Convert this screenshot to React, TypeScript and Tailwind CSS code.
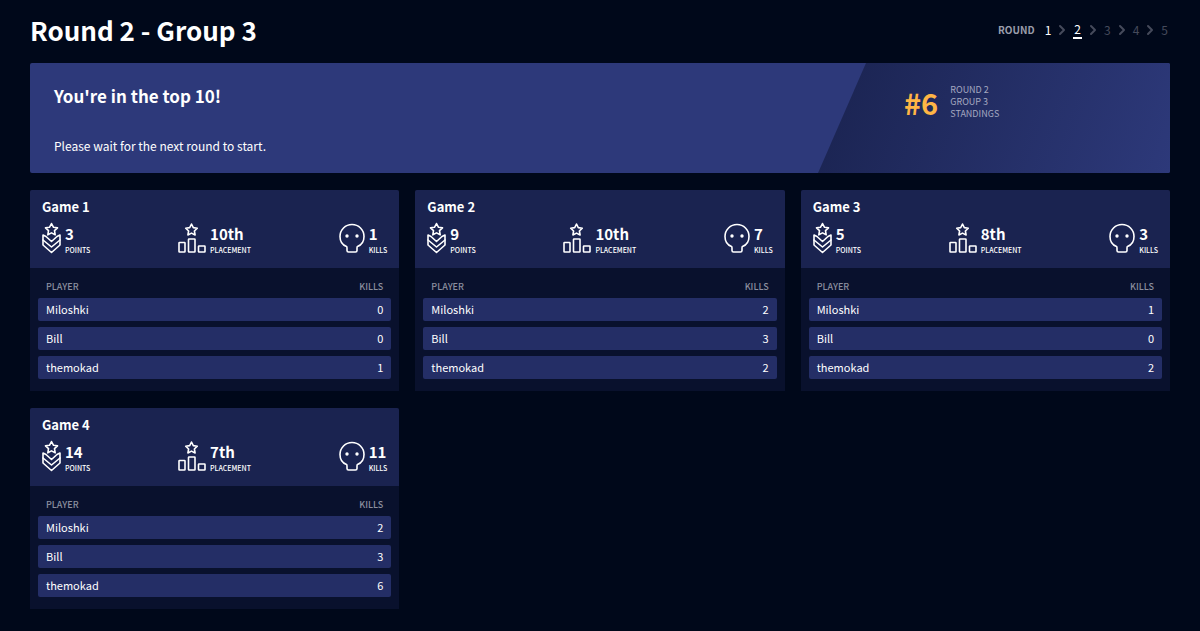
import React from 'react';
import { ChevronRight } from 'lucide-react';

interface PlayerKills {
  name: string;
  kills: number;
}

interface Game {
  id: number;
  points: number;
  placement: string;
  kills: number;
  players: PlayerKills[];
}

const makePlayers = (kills: number[]): PlayerKills[] =>
  ['Miloshki', 'Bill', 'themokad'].map((name, i) => ({ name, kills: kills[i] }));

const games: Game[] = [
  { id: 1, points: 3, placement: '10th', kills: 1, players: makePlayers([0, 0, 1]) },
  { id: 2, points: 9, placement: '10th', kills: 7, players: makePlayers([2, 3, 2]) },
  { id: 3, points: 5, placement: '8th', kills: 3, players: makePlayers([1, 0, 2]) },
  { id: 4, points: 14, placement: '7th', kills: 11, players: makePlayers([2, 3, 6]) },
];

const rounds = [1, 2, 3, 4, 5];
const currentRound = 2;

const iconProps = {
  fill: 'none',
  stroke: 'currentColor',
  strokeWidth: 1.6,
  strokeLinejoin: 'round' as const,
  strokeLinecap: 'round' as const,
  'aria-hidden': true,
};

const RankIcon = () => (
  <svg width="19" height="32" viewBox="0 0 19 32" {...iconProps}>
    <path d="M9.500 1.500l1.900 3.700 4.100.6-3 2.900.7 4.100-3.700-1.900-3.700 1.900.7-4.100-3-2.900 4.100-.6z" />
    <path d="M4 14.500l-3-1.500v10l8.500 7.500L18 23V13l-3 1.500-5.500 5z" />
    <path d="M1 18l8.500 7L18 18" />
  </svg>
);

const PodiumIcon = () => (
  <svg width="28" height="32" viewBox="0 0 28 32" {...iconProps}>
    <path d="M13.500 2l1.800 3.600 4 .6-2.900 2.800.7 4-3.600-1.900-3.600 1.900.7-4-2.900-2.800 4-.6z" />
    <rect x="1" y="20.500" width="6" height="9.500" rx="0.5" />
    <rect x="10.500" y="17" width="6.500" height="13" rx="0.5" />
    <rect x="20.500" y="24" width="6.500" height="6" rx="0.5" />
  </svg>
);

const SkullIcon = () => (
  <svg width="26" height="32" viewBox="0 0 26 32" {...iconProps}>
    <path d="M7.500 24.500C3.500 23 1 19 1 14.500a12 12 0 0 1 24 0c0 4.500-2.500 8.500-6.500 10-.5.3-.5.700-.5 1.500v2.500q0 1.500-1.500 1.500h-7Q8 30 8 28.500V26c0-.8 0-1.200-.5-1.500z" />
    <circle cx="8" cy="14" r="1.700" fill="currentColor" stroke="none" />
    <circle cx="18" cy="14" r="1.700" fill="currentColor" stroke="none" />
  </svg>
);

interface StatProps {
  icon: React.ReactNode;
  value: number | string;
  label: string;
}

const Stat: React.FC<StatProps> = ({ icon, value, label }) => (
  <div className="flex items-center gap-1">
    {icon}
    <div className="pt-1">
      <div className="text-[15px] leading-5 font-bold">{value}</div>
      <div className="text-[7px] leading-3 font-medium">{label}</div>
    </div>
  </div>
);

const GameCard: React.FC<{ game: Game }> = ({ game }) => (
  <section className="overflow-hidden rounded-t-xs bg-[#09112d]">
    <header className="bg-[#1a2350] px-3 pt-2 pb-3">
      <h2 className="text-[13px] leading-[18px] font-bold">Game {game.id}</h2>
      <div className="mt-1 flex items-center justify-between">
        <Stat icon={<RankIcon />} value={game.points} label="POINTS" />
        <Stat icon={<PodiumIcon />} value={game.placement} label="PLACEMENT" />
        <Stat icon={<SkullIcon />} value={game.kills} label="KILLS" />
      </div>
    </header>
    <div className="px-2 pt-2 pb-[6px]">
      <table className="w-full border-separate border-spacing-x-0 border-spacing-y-[6px] text-[11px] leading-[23px]">
        <thead className="text-[9px] leading-[10px] text-[#8b8f9f]">
          <tr>
            <th className="px-2 text-left font-medium">PLAYER</th>
            <th className="px-2 text-right font-medium">KILLS</th>
          </tr>
        </thead>
        <tbody>
          {game.players.map((player) => (
            <tr key={player.name} className="bg-[#242e66]">
              <td className="rounded-l-xs px-2">{player.name}</td>
              <td className="rounded-r-xs px-2 text-right">{player.kills}</td>
            </tr>
          ))}
        </tbody>
      </table>
    </div>
  </section>
);

const RoundNav = () => (
  <nav aria-label="Rounds" className="flex items-center pr-[2px] text-[12px] leading-4">
    <span className="mr-[10px] text-[10px] font-bold text-[#9a9dab]">ROUND</span>
    {rounds.map((round, i) => (
      <React.Fragment key={round}>
        {i > 0 && <ChevronRight className="mx-[3px] size-4 text-[#454a5b]" strokeWidth={3} />}
        {round <= currentRound ? (
          <a href={`#round-${round}`} className={round === currentRound ? 'border-b-2 border-white px-px' : ''}>
            {round}
          </a>
        ) : (
          <span className="text-[#454a5b]">{round}</span>
        )}
      </React.Fragment>
    ))}
  </nav>
);

const StandingBanner = () => (
  <section className="flex h-[110px] overflow-hidden rounded-xs bg-[#2d397a]">
    <div className="flex flex-1 flex-col justify-between px-6 py-[19px]">
      <h2 className="text-[17px] leading-7 font-bold">You're in the top 10!</h2>
      <p className="text-[12px] leading-4">Please wait for the next round to start.</p>
    </div>
    <div className="w-[352px] bg-linear-[110deg,#1a2350,#2d397a] pt-[19px] pl-[86px] [clip-path:polygon(48px_0,100%_0,100%_100%,0_100%)]">
      <div className="flex items-center gap-3">
        <div className="text-[29px] leading-10 font-bold text-[#ffb545]">#6</div>
        <div className="text-[9px] leading-3 text-[#a5a9c0]">
          <div>ROUND 2</div>
          <div>GROUP 3</div>
          <div>STANDINGS</div>
        </div>
      </div>
    </div>
  </section>
);

export default function App() {
  return (
    <main className="min-h-screen bg-[#00081a] px-[30px] pb-5 font-['Noto_Sans_CJK_SC',sans-serif] text-white">
      <header className="flex h-[63px] items-center justify-between pb-1">
        <h1 className="text-[26px] leading-9 font-bold">Round 2 - Group 3</h1>
        <RoundNav />
      </header>
      <StandingBanner />
      <div className="mt-[17px] grid grid-cols-3 gap-x-4 gap-y-[17px]">
        {games.map((game) => (
          <GameCard key={game.id} game={game} />
        ))}
      </div>
    </main>
  );
}
